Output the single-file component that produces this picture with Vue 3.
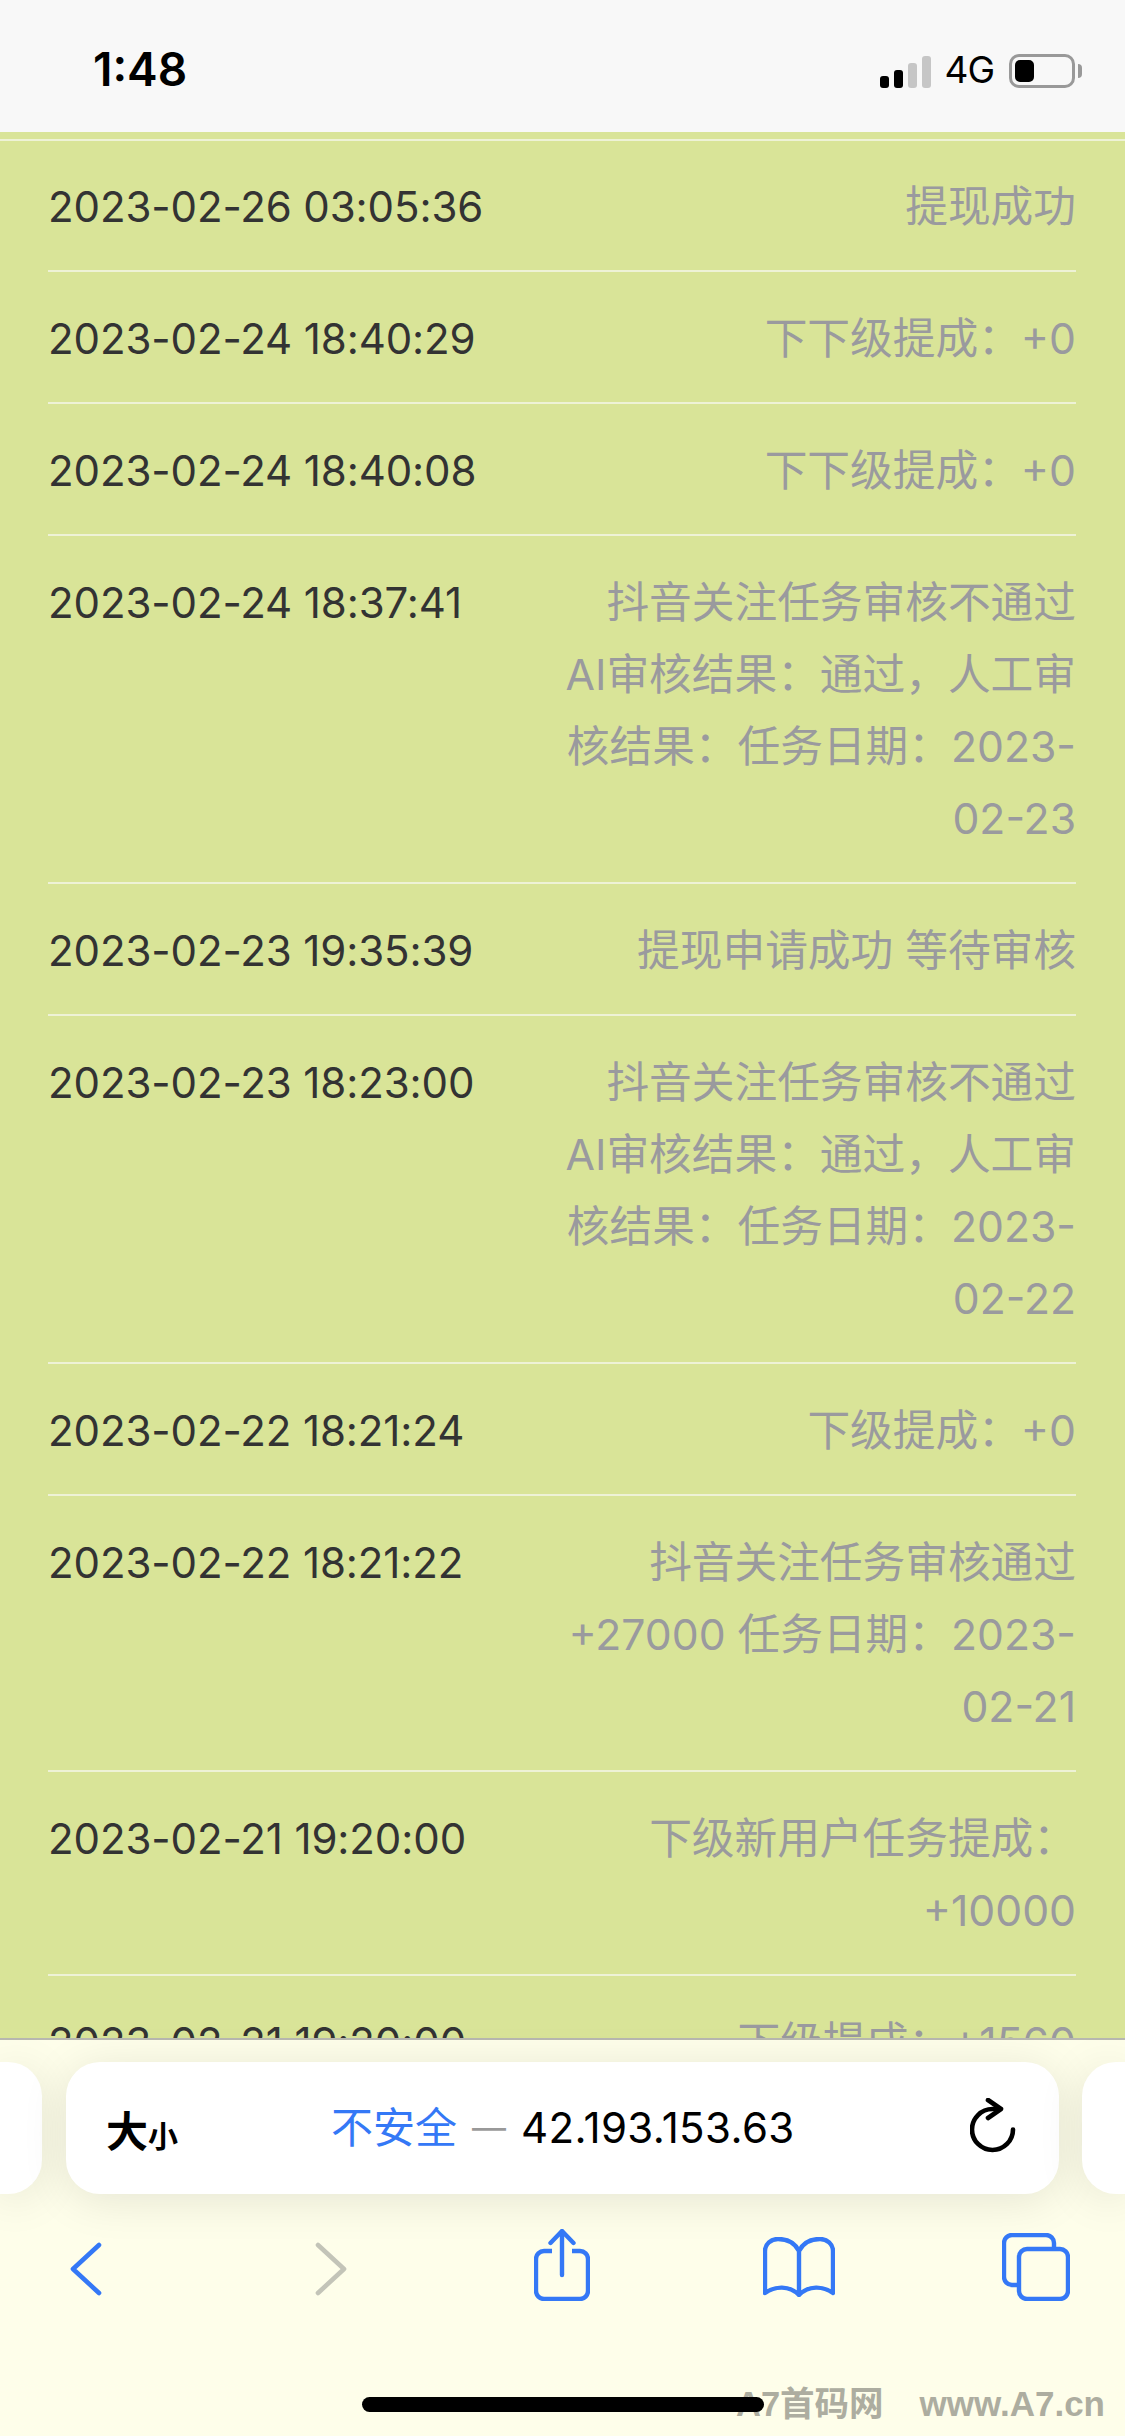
<template>
  <div class="phone">
    <!-- status bar -->
    <div class="status-bar">
      <span class="clock">1:48</span>
      <div class="status-right">
        <div class="signal">
          <i v-for="(bar, index) in signalBars" :key="index" :class="['bar', { off: index > 1 }]" :style="{ height: bar + 'px' }"></i>
        </div>
        <span class="network">4G</span>
        <div class="battery"><div class="battery-level"></div></div>
        <div class="battery-nub"></div>
      </div>
    </div>

    <!-- record list -->
    <div class="content">
      <div class="record-list">
        <div v-for="(item, index) in records" :key="index" class="record-row">
          <div class="record-time">{{ item.time }}</div>
          <div class="record-note">{{ item.note }}</div>
        </div>
      </div>
    </div>

    <!-- safari toolbar -->
    <div class="toolbar">
      <div class="url-row">
        <div class="side-pill left"></div>
        <div class="url-pill">
          <span class="text-size">大<small>小</small></span>
          <div class="address">
            <span class="insecure">不安全</span>
            <span class="dash">—</span>
            <span class="host">42.193.153.63</span>
          </div>
          <svg class="reload" width="46" height="56" viewBox="0 0 46 56" fill="none" stroke="#000" stroke-width="4.6" stroke-linecap="round" stroke-linejoin="round">
            <path d="M43 31.5a20.5 20.5 0 1 1-20.5-20.5h8" />
            <path d="M18 2l13 9-13 9" />
          </svg>
        </div>
        <div class="side-pill right"></div>
      </div>

      <div class="nav-row">
        <svg class="nav-icon back" width="32" height="54" viewBox="0 0 32 54" fill="none" stroke="#3478f6" stroke-width="4.6" stroke-linecap="round" stroke-linejoin="round">
          <path d="M29 3L3 27l26 24" />
        </svg>
        <svg class="nav-icon forward" width="32" height="54" viewBox="0 0 32 54" fill="none" stroke="#c3c4b8" stroke-width="4.6" stroke-linecap="round" stroke-linejoin="round">
          <path d="M3 3l26 24L3 51" />
        </svg>
        <svg class="nav-icon share" width="56" height="72" viewBox="0 0 56 72" fill="none" stroke="#3478f6" stroke-width="4.4" stroke-linecap="round" stroke-linejoin="round">
          <path d="M18 22H10a8 8 0 0 0-8 8v32a8 8 0 0 0 8 8h36a8 8 0 0 0 8-8V30a8 8 0 0 0-8-8h-8" stroke-linecap="butt" />
          <path d="M28 46V2M16.500 14L28 2l11.500 12" />
        </svg>
        <svg class="nav-icon book" width="72" height="60" viewBox="0 0 72 60" fill="none" stroke="#3478f6" stroke-width="4.4" stroke-linecap="round" stroke-linejoin="round">
          <path d="M36 14C32 6 24 2 15 2 8 2 2 7 2 14v42c10-7 24-8 34 2 10-10 24-9 34-2V14c0-7-6-12-13-12-9 0-17 4-21 12zM36 14v44" />
        </svg>
        <svg class="nav-icon tabs" width="68" height="68" viewBox="0 0 68 68" fill="none" stroke="#3478f6" stroke-width="4.4" stroke-linejoin="round">
          <path d="M52 15V10a8 8 0 0 0-8-8H10a8 8 0 0 0-8 8v34a8 8 0 0 0 8 8h6" />
          <rect x="17" y="16" width="49" height="50" rx="8" />
        </svg>
      </div>

      <div class="watermark">
        <span>A7首码网</span>
        <span class="watermark-url">www.A7.cn</span>
      </div>
      <div class="home-bar"></div>
    </div>
  </div>
</template>

<script setup>
const signalBars = [12, 18, 25, 32]

const reviewFail = date => `抖音关注任务审核不通过 AI审核结果：通过，人工审核结果：任务日期：${date}`

const records = [
  { time: '2023-02-26 03:05:36', note: '提现成功' },
  { time: '2023-02-24 18:40:29', note: '下下级提成：+0' },
  { time: '2023-02-24 18:40:08', note: '下下级提成：+0' },
  { time: '2023-02-24 18:37:41', note: reviewFail('2023-02-23') },
  { time: '2023-02-23 19:35:39', note: '提现申请成功 等待审核' },
  { time: '2023-02-23 18:23:00', note: reviewFail('2023-02-22') },
  { time: '2023-02-22 18:21:24', note: '下级提成：+0' },
  { time: '2023-02-22 18:21:22', note: '抖音关注任务审核通过 +27000 任务日期：2023-02-21' },
  { time: '2023-02-21 19:20:00', note: '下级新用户任务提成：+10000' },
  { time: '2023-02-21 19:20:00', note: '下级提成：+1560' }
]
</script>

<style>
html, body {
  margin: 0;
  background: #d9e498;
}
</style>

<style scoped>
.phone {
  width: 1125px;
  height: 2436px;
  display: flex;
  flex-direction: column;
  overflow: hidden;
  position: relative;
  font-family: Inter, "Noto Sans CJK SC", sans-serif;
}

.status-bar {
  height: 132px;
  flex-shrink: 0;
  background: #f8f8f8;
  display: flex;
  justify-content: space-between;
  align-items: flex-start;
  box-sizing: border-box;
  padding: 42px 43px 0 93px;
}

.clock {
  font-size: 46px;
  line-height: 54px;
  font-weight: 600;
  color: #000;
}

.status-right {
  display: flex;
  align-items: flex-end;
  margin-top: 10px;
}

.signal {
  display: flex;
  align-items: flex-end;
  gap: 5px;
  height: 33px;
}

.bar {
  width: 9px;
  border-radius: 3px;
  background: #000;
}

.bar.off {
  background: #c6c6c6;
}

.network {
  font-size: 37px;
  line-height: 36px;
  letter-spacing: -1px;
  color: #000;
  margin: 0 15px 0 13px;
}

.battery {
  width: 66px;
  height: 34px;
  box-sizing: border-box;
  border: 3px solid #999;
  border-radius: 10px;
  padding: 3px;
}

.battery-level {
  width: 19px;
  height: 100%;
  background: #000;
  border-radius: 5px;
}

.battery-nub {
  width: 4px;
  height: 14px;
  background: #999;
  margin: 0 0 10px 3px;
  border-radius: 0 4px 4px 0;
}

.content {
  flex: 1;
  min-height: 0;
  overflow: hidden;
  background: #d9e498;
  padding-top: 7px;
}

.record-list {
  border-top: 2px solid #eef2d6;
  padding: 0 49px 0 48px;
}

.record-row {
  display: flex;
  justify-content: space-between;
  padding: 31px 0 27px;
  border-bottom: 2px solid #eef2d6;
  font-size: 42px;
  line-height: 72px;
}

.record-row:first-child {
  margin-top: -1px;
}

.record-time {
  color: #333;
  white-space: nowrap;
  letter-spacing: -0.1px;
}

.record-note {
  width: 512px;
  text-align: right;
  color: #9a9a9e;
  font-size: 42.700px;
}

.toolbar {
  height: 398px;
  flex-shrink: 0;
  box-sizing: border-box;
  position: relative;
  background: #fefeea;
  border-top: 2px solid #b8b8b0;
  padding-top: 22px;
}

.url-row {
  display: flex;
  height: 132px;
}

.side-pill,
.url-pill {
  background: #fff;
  box-shadow: 0 6px 46px rgba(0, 0, 0, 0.1);
}

.side-pill {
  flex-shrink: 0;
}

.side-pill.left {
  width: 42px;
  margin-right: 24px;
  border-radius: 0 34px 34px 0;
}

.side-pill.right {
  width: 43px;
  margin-left: 23px;
  border-radius: 34px 0 0 34px;
}

.url-pill {
  flex: 1;
  border-radius: 34px;
  display: flex;
  align-items: center;
  box-sizing: border-box;
  padding: 0 43px 0 40px;
  font-size: 42px;
  color: #000;
}

.text-size {
  width: 80px;
  font-size: 42px;
  font-weight: 600;
  flex-shrink: 0;
}

.text-size small {
  font-size: 30px;
}

.address {
  flex: 1;
  display: flex;
  align-items: center;
  padding-left: 145px;
  white-space: nowrap;
  line-height: 60px;
}

.insecure {
  color: #3478f6;
}

.dash {
  color: #999;
  margin: 0 15px;
  font-size: 34px;
}

.host {
  letter-spacing: 0.4px;
}

.reload {
  flex-shrink: 0;
  margin-top: -4px;
}

.nav-row {
  display: flex;
  align-items: flex-start;
  margin-top: 35px;
  height: 80px;
}

.nav-icon {
  flex-shrink: 0;
}

.back {
  margin: 13px 0 0 70px;
}

.forward {
  margin: 13px 0 0 213px;
}

.share {
  margin: 0 0 0 187px;
}

.book {
  margin: 8px 0 0 173px;
}

.tabs {
  margin: 4px 0 0 167px;
}

.watermark {
  position: absolute;
  right: 20px;
  bottom: 19px;
  display: flex;
  gap: 36px;
  color: #adada0;
  font-size: 34.500px;
  line-height: 26px;
  font-weight: 700;
  font-family: "Liberation Sans", "Noto Sans CJK SC", sans-serif;
}

.watermark-url {
  font-size: 35px;
}

.home-bar {
  position: absolute;
  left: 362px;
  top: 357px;
  width: 402px;
  height: 15px;
  border-radius: 8px;
  background: #000;
}
</style>
